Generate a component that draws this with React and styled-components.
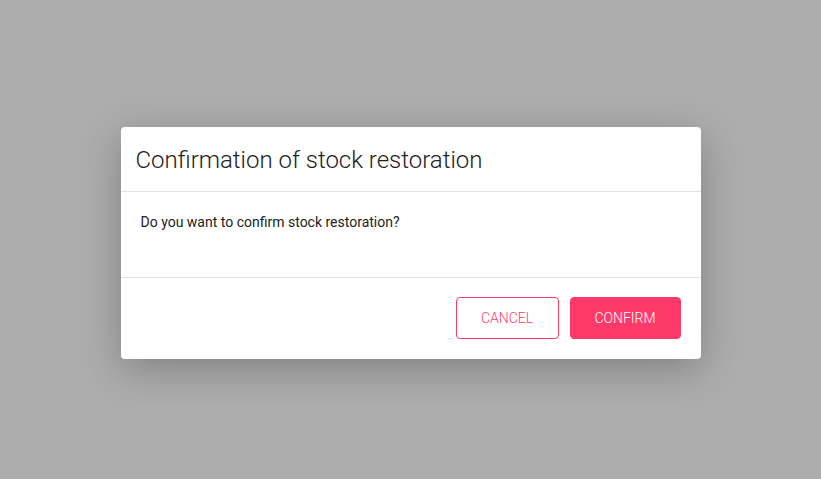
import React from "react";
import styled, { createGlobalStyle } from "styled-components";

const Global = createGlobalStyle`
  html, body { margin: 0; padding: 0; height: 100%; }
  body { background: #adadad; font-family: Roboto, "Liberation Sans", sans-serif; }
  #root { height: 100%; }
`;

const Backdrop = styled.div`
  width: 821px;
  height: 479px;
  background: #adadad;
  display: flex;
  justify-content: center;
  align-items: flex-start;
  padding-top: 127px;
  box-sizing: border-box;
`;

const Modal = styled.div`
  width: 580px;
  background: #fff;
  border-radius: 4px;
  box-shadow: 0 10px 40px rgba(0, 0, 0, 0.25);
  display: flex;
  flex-direction: column;
`;

const Header = styled.div`
  height: 65px;
  box-sizing: border-box;
  padding: 1px 15px 0;
  display: flex;
  align-items: center;
  border-bottom: 1px solid #e3e3e3;
`;

const Title = styled.h2`
  margin: 0;
  font-size: 24px;
  font-weight: 300;
  color: #222;
`;

const Body = styled.div`
  height: 86px;
  box-sizing: border-box;
  padding: 22px 20px;
  border-bottom: 1px solid #e3e3e3;
  font-size: 14px;
  color: #222;
`;

const Footer = styled.div`
  height: 81px;
  box-sizing: border-box;
  padding: 19px 20px 0;
  display: flex;
  justify-content: flex-end;
  gap: 11px;
`;

const Button = styled.button`
  height: 42px;
  width: ${(p) => p.$w}px;
  box-sizing: border-box;
  padding: 0;
  border-radius: 4px;
  font-family: Roboto, "Liberation Sans", sans-serif;
  font-size: 14px;
  font-weight: 300;
  text-transform: uppercase;
  cursor: pointer;
  border: 1px solid #ff3a6b;
  background: ${(p) => (p.$primary ? "#ff3a6b" : "#fff")};
  color: ${(p) => (p.$primary ? "#fff" : "#ff3a6b")};
`;

export default function App() {
  return (
    <>
      <Global />
      <Backdrop>
        <Modal>
          <Header>
            <Title>Confirmation of stock restoration</Title>
          </Header>
          <Body>Do you want to confirm stock restoration?</Body>
          <Footer>
            <Button $w={103}>Cancel</Button>
            <Button $w={111} $primary>Confirm</Button>
          </Footer>
        </Modal>
      </Backdrop>
    </>
  );
}
